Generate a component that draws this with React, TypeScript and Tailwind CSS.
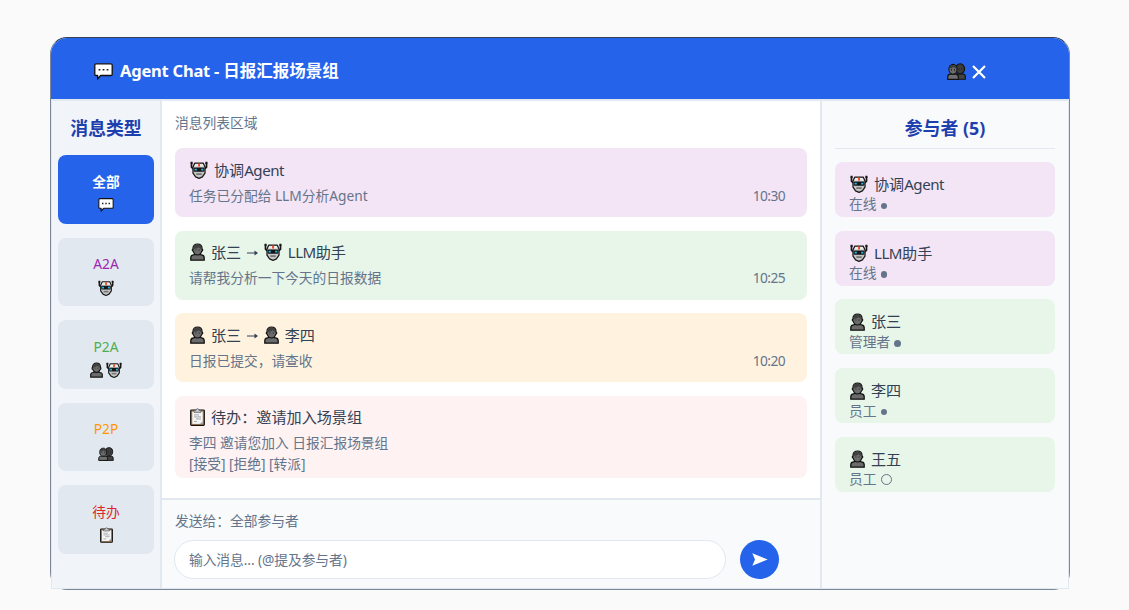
import type { ReactNode } from 'react';

type IconProps = { className?: string };

function Robot({ className = '' }: IconProps) {
  return (
    <svg viewBox="0 0 18 18" className={`shrink-0 ${className}`}>
      <path d="M1.500 1.500v4.700l1.700 1.600M16.500 1.500v4.700l-1.700 1.600" fill="none" stroke="#161616" strokeWidth="1.700" />
      <path d="M3 6 4.800 2.100h8.400L15 6v6.200l-2.600 3.700-3.400 1.500-3.400-1.500L3 12.200z" fill="#c6c6c6" stroke="#1b1b1b" strokeWidth="1.300" strokeLinejoin="round" />
      <path d="M5.300 2.900h7.400l1 2.700H4.300z" fill="#ededed" />
      <path d="M.6.800h2v2.200h-2zM15.400.800h2v2.200h-2z" fill="#161616" />
      <path d="M8.100 2.400h1.900v3.200H8.100z" fill="#f0441c" />
      <rect x="3.700" y="6.500" width="10.600" height="4.200" rx="1" fill="#151515" />
      <path d="M4.600 7.700h2.200v1.900H4.600zM11.200 7.700h2.200v1.900h-2.200z" fill="#22b8e6" />
      <path d="M6.300 12.200h5.400v1.800H6.300z" fill="#777" />
    </svg>
  );
}

function Person({ className = '' }: IconProps) {
  return (
    <svg viewBox="0 0 15 18" className={`shrink-0 ${className}`}>
      <path d="M.8 17.200v-2.400c0-1.700 1-2.700 2.700-2.900l2-.8h4l2 .8c1.700.2 2.700 1.200 2.700 2.900v2.400z" fill="#6b6b6b" stroke="#111" strokeWidth="1.300" />
      <path d="M7.500 1C4.800 1 3 2.800 3 5.300v.9c-.6 0-.8.5-.7 1 .1.600.5 1 1 1.100.6 2 2.100 3.700 4.200 3.700s3.600-1.700 4.200-3.700c.5-.1.9-.5 1-1.100.1-.5-.1-1-.7-1v-.9C12 2.800 10.200 1 7.500 1z" fill="#6b6b6b" stroke="#111" strokeWidth="1.200" />
      <path d="M3.500 6V4.500C4 2.600 5.500 1.500 7.500 1.500s3.500 1.100 4 3V6c-1.200-.2-2.300-1-2.800-1.800C7.500 5.300 5.500 5.800 3.500 6z" fill="#404040" />
      <path d="M5.200 6.400h1.300v1H5.200zM8.500 6.400h1.300v1H8.500z" fill="#333" />
    </svg>
  );
}

function People({ className = '' }: IconProps) {
  return (
    <svg viewBox="0 0 19 17" className={`shrink-0 ${className}`}>
      <path d="M8 16.300v-3.500c0-1 1-1.800 2.200-1.800h5.300c1.800 0 2.800 1 2.800 2.700v2.600z" fill="#444" stroke="#111" strokeWidth="1.100" />
      <ellipse cx="13.100" cy="5.800" rx="4.500" ry="5" fill="#3c3c3c" stroke="#111" strokeWidth="1.100" />
      <path d="M.7 16.300v-2.500c0-1.700 1-2.500 2.600-2.700h5.400c1.600.2 2.600 1 2.600 2.700v2.500z" fill="#707070" stroke="#111" strokeWidth="1.200" />
      <ellipse cx="6" cy="6.300" rx="4.100" ry="4.900" fill="#6b6b6b" stroke="#111" strokeWidth="1.100" />
      <path d="M2.500 5.500C2.800 3 4 1.900 6 1.900s3.200 1.100 3.500 3.600C8 5.200 7 4.500 6.600 3.800 5.500 4.900 4.200 5.400 2.500 5.500z" fill="#3a3a3a" />
      <path d="M4 6h1v1.400H4zM7 6h1v1.400H7zM11.500 5.500h1v1.300h-1zM14.500 5.500h1v1.300h-1z" fill="#222" />
    </svg>
  );
}

function Bubble({ className = '' }: IconProps) {
  return (
    <svg viewBox="0 0 19 17" className={`shrink-0 ${className}`}>
      <path d="M2 .8h15c.8 0 1.200.4 1.200 1.200v9.300c0 .8-.4 1.200-1.200 1.200H6.600L3.600 16v-3.500H2c-.8 0-1.200-.4-1.200-1.200V2C.8 1.200 1.200.8 2 .8z" fill="#fff" stroke="#111" strokeWidth="1.300" strokeLinejoin="round" />
      <path d="M4.600 5.900h1.800v1.700H4.600zM8.600 5.900h1.800v1.700H8.600zM12.600 5.900h1.800v1.700h-1.800z" fill="#222" />
    </svg>
  );
}

function Clipboard({ className = '' }: IconProps) {
  return (
    <svg viewBox="0 0 15 18" className={`shrink-0 ${className}`}>
      <rect x=".7" y="2" width="13.600" height="15.300" rx=".8" fill="#b98a5e" stroke="#111" strokeWidth="1.200" />
      <path d="M2.300 3.700h10.400v12.200H2.300z" fill="#f4f4f4" />
      <path d="M4 4.300V2.300h2C6.200 1.200 6.700.7 7.500.7s1.300.5 1.500 1.600h2v2z" fill="#c9d0d5" stroke="#555" strokeWidth=".8" />
      <path d="M4 6.900h5M4 8.900h7M6 10.900h5M4 13.500h3" stroke="#9aa0a6" strokeWidth=".9" />
      <path d="M10 15.900h2.700v-2.700z" fill="#9c9c9c" />
    </svg>
  );
}

function Tab({ label, icon, tone }: { label: string; icon: ReactNode; tone: string }) {
  return (
    <div className={`flex h-[68.750px] flex-col items-center rounded-[8px] pt-[16.500px] text-[13.750px] leading-5 ${tone}`}>
      <div>{label}</div>
      <div className="mt-[5px] flex h-[17px] items-center gap-[3px]">{icon}</div>
    </div>
  );
}

function Message({ title, lines, time, tone }: { title: ReactNode; lines: string[]; time?: string; tone: string }) {
  return (
    <div className={`rounded-[8px] pt-[11px] pr-[22px] pl-[14px] ${tone}`}>
      <div className="flex h-[21px] items-center text-[15.125px] text-[#334155]">{title}</div>
      <div className="mt-[5.500px] flex justify-between text-[13.750px] leading-[20.600px] text-[#64748b]">
        <div>
          {lines.map((l) => (
            <div key={l} className="tracking-[-0.02px]">{l}</div>
          ))}
        </div>
        {time && <span className="tracking-[-0.6px]">{time}</span>}
      </div>
    </div>
  );
}

function Participant({ name, status, online = true, bot = false }: { name: ReactNode; status: string; online?: boolean; bot?: boolean }) {
  return (
    <div className={`h-[55px] rounded-[8px] pt-[12px] pl-[14px] ${bot ? 'bg-[#f3e5f5]' : 'bg-[#e8f5e9]'}`}>
      <div className="flex h-[21px] items-center text-[15.125px] text-[#334155]">
        {bot ? robot : person}
        {name}
      </div>
      <div className="flex h-[20px] items-center text-[13.750px] text-[#64748b]">
        {status}
        <span className={online ? 'ml-[4px] mt-[2px] h-[6.500px] w-[6.500px] rounded-full bg-[#64748b]' : 'ml-[4px] h-[11px] w-[11px] rounded-full border border-[#64748b]'} />
      </div>
    </div>
  );
}

const robot = <Robot className="ml-[1px] mr-[6px] h-[18px] w-[18px]" />;
const person = <Person className="ml-[1px] mr-[6px] h-[18px] w-[15px]" />;
const arrow = (
  <svg viewBox="0 0 11 8" className="mt-[2px] mr-[5px] ml-[5.500px] h-[8px] w-[11px]">
    <path d="M0 4h9.500" fill="none" stroke="#334155" strokeWidth="1" />
    <path d="M7.500 1.500 11 4 7.500 6.500z" fill="#334155" />
  </svg>
);

export default function App() {
  return (
    <div className="h-[610px] w-[1129px] overflow-hidden bg-[#fafafa] pt-[37px] pl-[50px] font-['Noto_Sans','Noto_Sans_CJK_SC',sans-serif] whitespace-nowrap">
      <div className="flex h-[553px] w-[1020px] flex-col rounded-[17px] border border-[#7b8797] border-t-[#334155] bg-[#f8fafc]">
        <header className="flex h-[61px] shrink-0 items-center rounded-t-[16px] bg-[#2563eb] pt-[6px] pr-[83px] pl-[43px] text-[16.500px] font-bold text-white">
          <Bubble className="mr-[7px] h-[17px] w-[19px]" />
          <span className="tracking-[-0.22px]">Agent Chat -&nbsp;</span>
          <span>日报汇报场景组</span>
          <People className="mr-[6px] ml-auto h-[17px] w-[19px]" />
          <svg viewBox="0 0 14 14" className="h-[14px] w-[14px]">
            <path d="M1 1l12 12M13 1 1 13" stroke="#fff" strokeWidth="2.200" />
          </svg>
        </header>

        <div className="flex h-[490px] shrink-0 border border-t-2 border-[#e2e8f0]">
          <aside className="w-[110px] shrink-0 border-r-2 border-[#e2e8f0] bg-[#f1f5f9] pr-[6px] pl-[6px]">
            <h2 className="mt-[14px] text-center text-[17.875px] leading-[27px] font-bold text-[#1e40af]">消息类型</h2>
            <div className="mt-[13px] flex flex-col gap-[13.750px]">
              <Tab label="全部" tone="bg-[#2563eb] text-white font-bold" icon={<Bubble className="h-[14px] w-[16px]" />} />
              <Tab label="A2A" tone="bg-[#e2e8f0] text-[#9c27b0]" icon={<Robot className="h-[16px] w-[16px]" />} />
              <Tab
                label="P2A"
                tone="bg-[#e2e8f0] text-[#4caf50]"
                icon={
                  <>
                    <Person className="h-[16px] w-[13px]" />
                    <Robot className="h-[16px] w-[16px]" />
                  </>
                }
              />
              <Tab label="P2P" tone="bg-[#e2e8f0] text-[#ff9800]" icon={<People className="mt-[2px] h-[14px] w-[16px]" />} />
              <Tab label="待办" tone="bg-[#e2e8f0] text-[#dc2626]" icon={<Clipboard className="h-[16px] w-[13px]" />} />
            </div>
          </aside>

          <main className="flex w-[658px] shrink-0 flex-col bg-white">
            <div className="h-[397px] shrink-0 pt-[12px] pl-[13px]">
              <div className="text-[13.750px] leading-5 text-[#64748b]">消息列表区域</div>
              <div className="mt-[15.400px] flex w-[632px] flex-col gap-[13.750px]">
                <Message tone="h-[68.750px] bg-[#f3e5f5]" title={<>{robot}协调<span className="tracking-[-0.5px]">Agent</span></>} lines={['任务已分配给 LLM分析Agent']} time="10:30" />
                <Message tone="h-[68.750px] bg-[#e8f5e9]" title={<>{person}张三{arrow}{robot}<span className="tracking-[-0.5px]">LLM</span>助手</>} lines={['请帮我分析一下今天的日报数据']} time="10:25" />
                <Message tone="h-[68.750px] bg-[#fff3e0]" title={<>{person}张三{arrow}{person}李四</>} lines={['日报已提交，请查收']} time="10:20" />
                <Message
                  tone="h-[82.500px] bg-[#fef2f2]"
                  title={<><Clipboard className="ml-[1px] mr-[6px] h-[18px] w-[15px]" />待办：邀请加入场景组</>}
                  lines={['李四 邀请您加入 日报汇报场景组', '[接受] [拒绝] [转派]']}
                />
              </div>
            </div>
            <div className="flex-1 border-t-2 border-[#e2e8f0] bg-[#f8fafc] pt-[11px] pl-[12px] text-[13.750px] leading-5 text-[#64748b]">
              <div className="pl-[1px]">发送给：全部参与者</div>
              <div className="mt-[9px] flex items-center gap-[14px]">
                <div className="flex h-[39px] w-[552px] items-center rounded-full border-[1.500px] border-[#e2e8f0] bg-white pl-[14px] tracking-[-0.08px]">输入消息... (@提及参与者)</div>
                <button className="flex h-[39px] w-[39px] items-center justify-center rounded-full bg-[#2563eb]">
                  <svg viewBox="0 0 16 13" className="h-[13px] w-[16px]">
                    <path d="M.3.3 15.700 6.500.3 12.700 3 6.500z" fill="#fff" />
                  </svg>
                </button>
              </div>
            </div>
          </main>

          <aside className="flex-1 border-l-2 border-[#e2e8f0] bg-[#f8fafc] pt-[14px] pr-[13px] pl-[13px]">
            <h2 className="h-[34px] border-b-[1.500px] border-[#e2e8f0] text-center text-[17.875px] leading-[27px] font-bold text-[#1e40af]">参与者 (5)</h2>
            <div className="mt-[12.750px] flex flex-col gap-[13.750px]">
              <Participant bot name={<>协调<span className="tracking-[-0.5px]">Agent</span></>} status="在线" />
              <Participant bot name={<><span className="tracking-[-0.5px]">LLM</span>助手</>} status="在线" />
              <Participant name="张三" status="管理者" />
              <Participant name="李四" status="员工" />
              <Participant name="王五" status="员工" online={false} />
            </div>
          </aside>
        </div>
      </div>
    </div>
  );
}
